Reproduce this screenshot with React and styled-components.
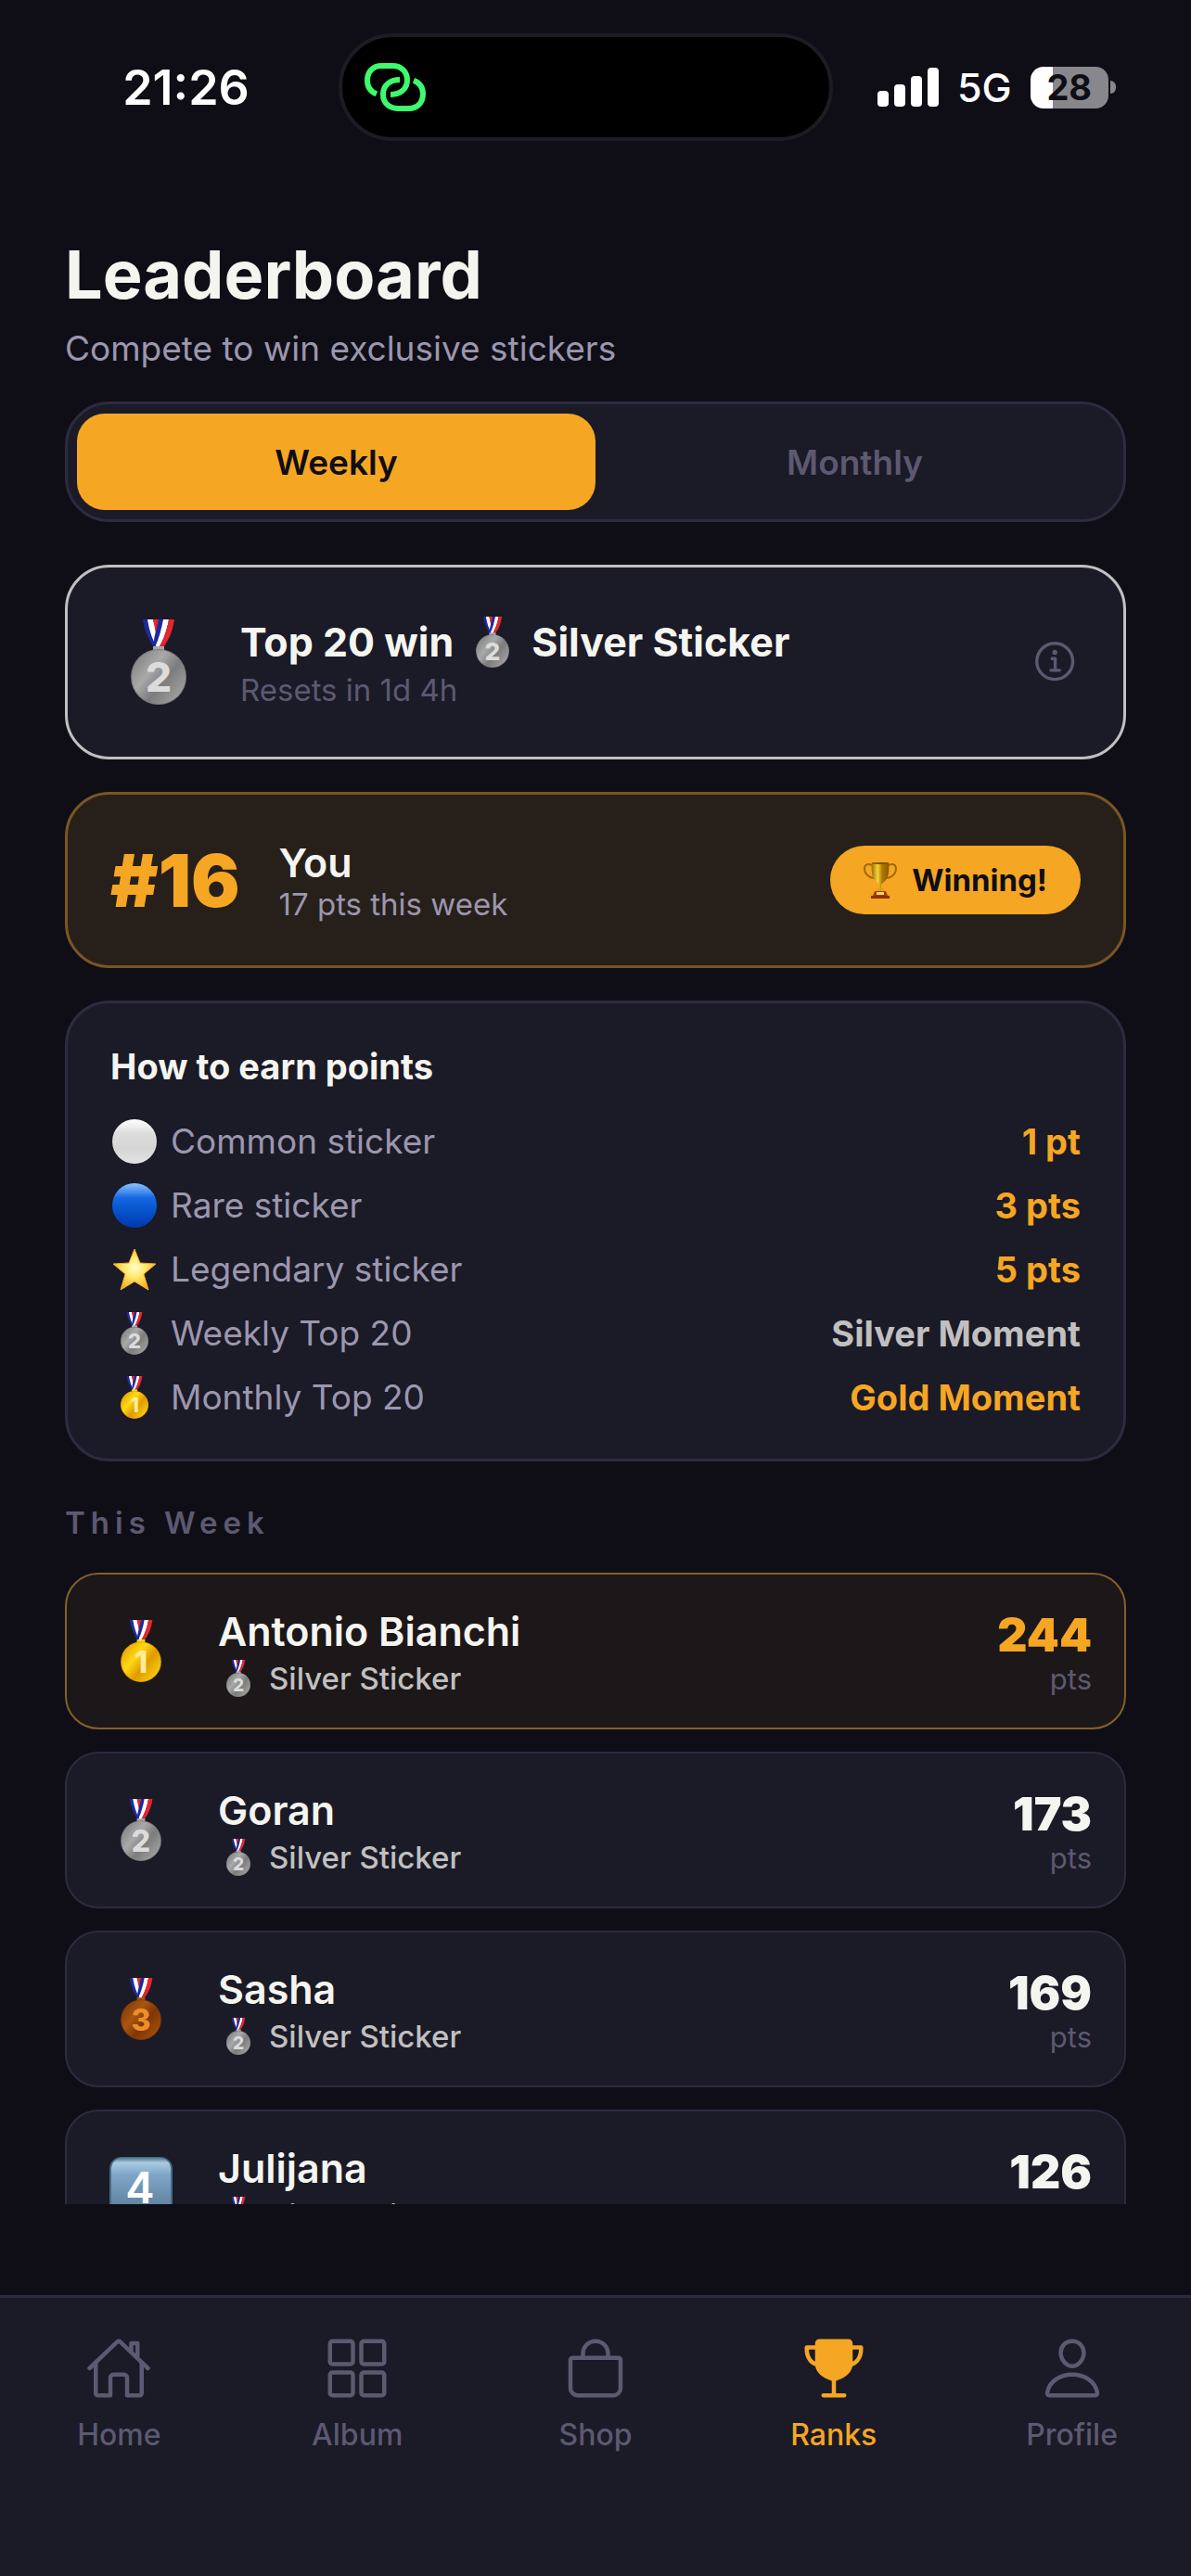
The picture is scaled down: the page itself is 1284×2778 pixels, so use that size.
import React, { useState } from "react";
import styled, { createGlobalStyle } from "styled-components";
import {
  IoHomeOutline,
  IoGridOutline,
  IoBagOutline,
  IoTrophy,
  IoPersonOutline,
  IoInformationCircleOutline,
} from "react-icons/io5";

const colors = {
  background: "#0f0e17",
  surface: "#1b1a27",
  border: "#2d2b40",
  gold: "#f5a623",
  silver: "#c0c0c0",
  text: "#f5f5f0",
  textSoft: "#9b97ae",
  textMuted: "#5c5970",
};

const GlobalStyle = createGlobalStyle`
  * {
    box-sizing: border-box;
  }
  body {
    margin: 0;
    background: ${colors.background};
    color: ${colors.text};
    font-family: Inter, "Liberation Sans", sans-serif;
  }
  h1, h2, h3, p, ul, ol, dl, dd, dt {
    margin: 0;
    padding: 0;
    list-style: none;
  }
  button {
    border: none;
    padding: 0;
    background: none;
    font-family: inherit;
    cursor: pointer;
  }
  svg {
    display: block;
    flex-shrink: 0;
  }
`;

const Screen = styled.div`
  height: 100vh;
  display: flex;
  flex-direction: column;
`;

/* status bar */

const StatusBar = styled.div`
  height: 188px;
  flex-shrink: 0;
  display: grid;
  grid-template-columns: 365fr 533fr 386fr;
  align-items: center;
`;

const Clock = styled.span`
  text-align: center;
  padding-left: 36px;
  color: #fff;
  font-size: 52px;
  font-weight: 600;
`;

const Island = styled.div`
  height: 116px;
  display: flex;
  align-items: center;
  padding-left: 24px;
  border: 4px solid #1d1c23;
  border-radius: 58px;
  background: #000;
`;

const StatusRight = styled.div`
  display: flex;
  align-items: center;
  gap: 20px;
  padding-left: 48px;
`;

const Network = styled.span`
  color: #fff;
  font-size: 43px;
  font-weight: 500;
`;

const BatteryWrap = styled.div`
  display: flex;
  align-items: center;
  gap: 2px;
`;

const BatteryBody = styled.div`
  width: 84px;
  height: 45px;
  display: flex;
  align-items: center;
  justify-content: center;
  border-radius: 14px;
  background: linear-gradient(to right, #fff 28%, #88878c 28%);
  color: ${colors.background};
  font-size: 38px;
  font-weight: 700;
`;

const BatteryTip = styled.div`
  width: 6px;
  height: 14px;
  border-radius: 0 6px 6px 0;
  background: #88878c;
`;

/* content */

const Scroll = styled.main`
  flex: 1;
  min-height: 0;
  overflow-y: auto;
  scrollbar-width: none;
  margin-bottom: 98px;
  padding: 63px 70px 0;
`;

const Header = styled.header`
  margin-bottom: 33px;
`;

const Title = styled.h1`
  font-size: 72px;
  line-height: 90px;
  font-weight: 700;
`;

const Subtitle = styled.p`
  margin-top: 11px;
  color: ${colors.textSoft};
  font-size: 37px;
  line-height: 48px;
`;

const Tabs = styled.div`
  display: flex;
  margin-bottom: 46px;
  padding: 10px;
  border: 3px solid ${colors.border};
  border-radius: 48px;
  background: ${colors.surface};
`;

const Tab = styled.button`
  flex: 1;
  height: 104px;
  border-radius: 30px;
  background: ${(props) => (props.$active ? colors.gold : "transparent")};
  color: ${(props) => (props.$active ? colors.background : colors.textMuted)};
  font-size: 37px;
  font-weight: 600;
`;

const Card = styled.section`
  margin-bottom: 35px;
  border: 3px solid ${colors.border};
  border-radius: 48px;
  background: ${colors.surface};
`;

const PrizeCard = styled(Card)`
  height: 210px;
  display: flex;
  align-items: center;
  gap: 36px;
  padding: 0 46px;
  border-color: ${colors.silver};
`;

const PrizeMedal = styled.div`
  width: 104px;
  display: flex;
  justify-content: center;
`;

const PrizeInfo = styled.div`
  flex: 1;
`;

const PrizeTitle = styled.h2`
  display: flex;
  align-items: center;
  gap: 24px;
  font-size: 43px;
  line-height: 60px;
  font-weight: 700;
`;

const PrizeReset = styled.p`
  color: ${colors.textMuted};
  font-size: 33px;
  line-height: 44px;
`;

const InfoButton = styled.button`
  color: ${colors.textMuted};
  font-size: 54px;
`;

const YouCard = styled(Card)`
  height: 190px;
  display: flex;
  align-items: center;
  gap: 42px;
  padding: 0 46px;
  border-color: #7a5522;
  background: #271f1a;
`;

const YouRank = styled.span`
  color: ${colors.gold};
  font-size: 78px;
  font-weight: 900;
`;

const YouInfo = styled.div`
  flex: 1;
`;

const YouName = styled.h2`
  font-size: 43px;
  line-height: 52px;
  font-weight: 600;
`;

const YouPoints = styled.p`
  color: ${colors.textSoft};
  font-size: 33px;
  line-height: 38px;
`;

const WinBadge = styled.span`
  height: 74px;
  display: flex;
  align-items: center;
  gap: 16px;
  padding: 0 36px;
  border-radius: 37px;
  background: ${colors.gold};
  color: ${colors.background};
  font-size: 33px;
  font-weight: 700;
`;

const EarnCard = styled(Card)`
  margin-bottom: 46px;
  padding: 43px 46px 32px;
`;

const EarnTitle = styled.h2`
  margin-bottom: 21px;
  font-size: 38px;
  line-height: 50px;
  font-weight: 700;
`;

const EarnRow = styled.div`
  height: 69px;
  display: flex;
  align-items: center;
  justify-content: space-between;
  font-size: 37px;
`;

const EarnLabel = styled.dt`
  display: flex;
  align-items: center;
  gap: 13px;
  color: ${colors.textSoft};
`;

const EarnIcon = styled.span`
  width: 52px;
  display: flex;
  justify-content: center;
`;

const EarnValue = styled.dd`
  color: ${(props) => props.$color || colors.gold};
  font-size: 38px;
  font-weight: 700;
`;

const SectionLabel = styled.h3`
  margin-bottom: 34px;
  color: ${colors.textMuted};
  font-size: 33px;
  line-height: 40px;
  font-weight: 600;
  letter-spacing: 6px;
`;

const PlayerRow = styled.li`
  height: 169px;
  display: flex;
  align-items: center;
  gap: 38px;
  margin-bottom: 24px;
  padding: 0 35px;
  border: 2px solid ${(props) => (props.$first ? "#85602a" : colors.border)};
  border-radius: 36px;
  background: ${(props) => (props.$first ? "#1c1718" : colors.surface)};
`;

const PlayerRank = styled.div`
  width: 90px;
  display: flex;
  justify-content: center;
`;

const PlayerInfo = styled.div`
  flex: 1;
`;

const PlayerName = styled.h4`
  margin: 0;
  font-size: 43px;
  line-height: 58px;
  font-weight: 600;
`;

const PlayerPrize = styled.p`
  display: flex;
  align-items: center;
  gap: 20px;
  padding-left: 9px;
  color: ${colors.silver};
  font-size: 33px;
  line-height: 44px;
  font-weight: 500;
`;

const PlayerScore = styled.div`
  text-align: right;
`;

const ScoreValue = styled.div`
  color: ${(props) => (props.$first ? colors.gold : colors.text)};
  font-size: 50px;
  line-height: 59px;
  font-weight: 900;
`;

const ScoreUnit = styled.div`
  color: ${colors.textMuted};
  font-size: 31px;
  line-height: 35px;
`;

/* bottom navigation */

const BottomNav = styled.nav`
  height: 303px;
  flex-shrink: 0;
  display: grid;
  grid-template-columns: repeat(5, 1fr);
  align-items: start;
  padding-top: 40px;
  border-top: 3px solid ${colors.border};
  background: ${colors.surface};
`;

const NavItem = styled.a`
  display: flex;
  flex-direction: column;
  align-items: center;
  gap: 14px;
  color: ${(props) => (props.$active ? colors.gold : colors.textMuted)};
  font-size: 32px;
  line-height: 44px;
  font-weight: 500;
  text-decoration: none;

  svg {
    width: 72px;
    height: 72px;
  }
`;

const medalColors = {
  1: { light: "#ffd914", dark: "#e09a00", number: "#ffec9a" },
  2: { light: "#a9a9a9", dark: "#7c7c7c", number: "#dcdcdc" },
  3: { light: "#a9560f", dark: "#7d3606", number: "#ee8d2c" },
};

const Medal = ({ place, size }) => {
  const { light, dark, number } = medalColors[place];
  return (
    <svg width={size} height={Math.round((size * 92) / 60)} viewBox="0 0 60 92">
      <defs>
        <linearGradient id={`disc${place}`} x1="0" y1="0.1" x2="1" y2="0.9">
          <stop offset="0" stopColor={dark} />
          <stop offset="0.35" stopColor={light} />
          <stop offset="0.6" stopColor={dark} />
          <stop offset="1" stopColor={light} />
        </linearGradient>
      </defs>
      <path d="M13 0h5l10 30h-3C19 22 15 12 13 0z" fill="#1d2a9c" />
      <path d="M18 0h6l6 22-2 8C23 21 20 12 18 0z" fill="#fff" />
      <path d="M24 0h6l1 20-2 5z" fill="#e5262c" />
      <path d="M30 0h5c-2 12-5 22-9 30h-2c1-12 4-20 6-30z" fill="#1d2a9c" />
      <path d="M35 0h6c-2 12-6 23-11 31h-4c4-10 7-20 9-31z" fill="#fff" />
      <path d="M41 0h6c-2 13-6 23-13 31h-4c5-9 9-19 11-31z" fill="#e5262c" />
      <path d="M24 29h12v5H24z" fill={light} />
      <circle cx="30" cy="62" r="30" fill={dark} />
      <circle cx="30" cy="62" r="29" fill={`url(#disc${place})`} />
      <text
        x="30"
        y="78"
        textAnchor="middle"
        fontFamily="Inter, sans-serif"
        fontSize="44"
        fontWeight="800"
        fill={number}
      >
        {place}
      </text>
    </svg>
  );
};

const Ball = ({ id, stops }) => (
  <svg width="48" height="48" viewBox="0 0 48 48">
    <defs>
      <linearGradient id={id} x1="0" y1="0" x2="0" y2="1">
        {stops.map((color, i) => (
          <stop key={color} offset={i / (stops.length - 1)} stopColor={color} />
        ))}
      </linearGradient>
    </defs>
    <circle cx="24" cy="24" r="24" fill={`url(#${id})`} />
  </svg>
);

const Star = () => (
  <svg width="48" height="46" viewBox="0 0 48 46">
    <defs>
      <radialGradient id="star" cx="0.5" cy="0.45" r="0.6">
        <stop offset="0" stopColor="#fffbd0" />
        <stop offset="0.4" stopColor="#ffe96e" />
        <stop offset="1" stopColor="#f3a712" />
      </radialGradient>
    </defs>
    <path
      d="M24 1l6 15 17 1-13 11 5 17-15-9-15 9 5-17L1 17l17-1z"
      fill="url(#star)"
      stroke="#f2ad2c"
      strokeWidth="1"
      strokeLinejoin="round"
    />
  </svg>
);

const GoldCup = () => (
  <svg width="36" height="40" viewBox="0 0 36 40">
    <defs>
      <linearGradient id="cup" x1="0" y1="0" x2="1" y2="0">
        <stop offset="0" stopColor="#a06a00" />
        <stop offset="0.35" stopColor="#f5d53a" />
        <stop offset="0.6" stopColor="#b27a00" />
        <stop offset="1" stopColor="#8a5600" />
      </linearGradient>
    </defs>
    <path
      d="M9 4C5 2 1 3 1 8c0 5 4 9 10 10M27 4c4-2 8-1 8 4 0 5-4 9-10 10"
      fill="none"
      stroke="#9c6a0a"
      strokeWidth="2"
    />
    <path d="M9 1h18c1 10 0 18-6 22l-2 2v5h-2v-5l-2-2C9 19 8 11 9 1z" fill="url(#cup)" />
    <ellipse cx="18" cy="2" rx="9" ry="1" fill="#7d5200" />
    <path d="M15 29h6l3 4H12z" fill="#d9a516" />
    <path d="M12 32h12l2 5H10z" fill="#a33d12" />
    <path d="M8 37h20v3H8z" fill="#8c2f0c" />
    <path d="M14 33h8v3h-8z" fill="#f2d36b" />
  </svg>
);

const KeycapFour = () => (
  <svg width="68" height="68" viewBox="0 0 68 68">
    <defs>
      <linearGradient id="keycap" x1="0" y1="0" x2="0" y2="1">
        <stop offset="0" stopColor="#4f7690" />
        <stop offset="0.08" stopColor="#a9cbe0" />
        <stop offset="0.28" stopColor="#7ea6c8" />
        <stop offset="1" stopColor="#56748f" />
      </linearGradient>
    </defs>
    <rect width="68" height="68" rx="13" fill="#486a82" />
    <rect x="2" y="1" width="64" height="66" rx="12" fill="url(#keycap)" />
    <text
      x="33"
      y="50"
      textAnchor="middle"
      fontFamily="Inter, sans-serif"
      fontSize="47"
      fontWeight="600"
      fill="#fff"
    >
      4
    </text>
  </svg>
);

const HotspotIcon = () => (
  <svg width="66" height="52" viewBox="99 84 198 156" fill="none" stroke="#3dfb6c" strokeWidth="18">
    <path d="M138 184C118 176 108 160 108 140C108 112 126 93 154 93H190C218 93 237 112 237 139C237 168 215 186 183 186" />
    <path
      transform="rotate(180 198 162)"
      d="M138 184C118 176 108 160 108 140C108 112 126 93 154 93H190C218 93 237 112 237 139C237 168 215 186 183 186"
    />
  </svg>
);

const SignalBars = () => (
  <svg width="66" height="42" viewBox="0 0 66 42" fill="#fff">
    <rect x="0" y="25" width="12" height="17" rx="4" />
    <rect x="18" y="18" width="12" height="24" rx="4" />
    <rect x="36" y="9" width="12" height="33" rx="4" />
    <rect x="54" y="0" width="12" height="42" rx="4" />
  </svg>
);

const earnRows = [
  {
    label: "Common sticker",
    value: "1 pt",
    icon: <Ball id="white" stops={["#ffffff", "#dcdcdc", "#d6d6d6", "#e2e2e2"]} />,
  },
  {
    label: "Rare sticker",
    value: "3 pts",
    icon: <Ball id="blue" stops={["#8cc4ff", "#1467e0", "#0550c8", "#0437ad"]} />,
  },
  { label: "Legendary sticker", value: "5 pts", icon: <Star /> },
  {
    label: "Weekly Top 20",
    value: "Silver Moment",
    color: colors.silver,
    icon: <Medal place={2} size={30} />,
  },
  { label: "Monthly Top 20", value: "Gold Moment", icon: <Medal place={1} size={30} /> },
];

const players = [
  { name: "Antonio Bianchi", points: 244 },
  { name: "Goran", points: 173 },
  { name: "Sasha", points: 169 },
  { name: "Julijana", points: 126 },
];

const navItems = [
  { label: "Home", Icon: IoHomeOutline },
  { label: "Album", Icon: IoGridOutline },
  { label: "Shop", Icon: IoBagOutline },
  { label: "Ranks", Icon: IoTrophy },
  { label: "Profile", Icon: IoPersonOutline },
];

const App = () => {
  const [period, setPeriod] = useState("Weekly");

  return (
    <Screen>
      <GlobalStyle />
      <StatusBar>
        <Clock>21:26</Clock>
        <Island>
          <HotspotIcon />
        </Island>
        <StatusRight>
          <SignalBars />
          <Network>5G</Network>
          <BatteryWrap>
            <BatteryBody>28</BatteryBody>
            <BatteryTip />
          </BatteryWrap>
        </StatusRight>
      </StatusBar>

      <Scroll>
        <Header>
          <Title>Leaderboard</Title>
          <Subtitle>Compete to win exclusive stickers</Subtitle>
        </Header>

        <Tabs>
          {["Weekly", "Monthly"].map((item) => (
            <Tab key={item} $active={item === period} onClick={() => setPeriod(item)}>
              {item}
            </Tab>
          ))}
        </Tabs>

        <PrizeCard>
          <PrizeMedal>
            <Medal place={2} size={60} />
          </PrizeMedal>
          <PrizeInfo>
            <PrizeTitle>
              <span>Top 20 win</span>
              <Medal place={2} size={36} />
              <span>Silver Sticker</span>
            </PrizeTitle>
            <PrizeReset>Resets in 1d 4h</PrizeReset>
          </PrizeInfo>
          <InfoButton aria-label="Prize info">
            <IoInformationCircleOutline />
          </InfoButton>
        </PrizeCard>

        <YouCard>
          <YouRank>#16</YouRank>
          <YouInfo>
            <YouName>You</YouName>
            <YouPoints>17 pts this week</YouPoints>
          </YouInfo>
          <WinBadge>
            <GoldCup />
            Winning!
          </WinBadge>
        </YouCard>

        <EarnCard>
          <EarnTitle>How to earn points</EarnTitle>
          <dl>
            {earnRows.map((row) => (
              <EarnRow key={row.label}>
                <EarnLabel>
                  <EarnIcon>{row.icon}</EarnIcon>
                  {row.label}
                </EarnLabel>
                <EarnValue $color={row.color}>{row.value}</EarnValue>
              </EarnRow>
            ))}
          </dl>
        </EarnCard>

        <SectionLabel>This Week</SectionLabel>
        <ol>
          {players.map((player, index) => (
            <PlayerRow key={player.name} $first={index === 0}>
              <PlayerRank>
                {index < 3 ? <Medal place={index + 1} size={44} /> : <KeycapFour />}
              </PlayerRank>
              <PlayerInfo>
                <PlayerName>{player.name}</PlayerName>
                <PlayerPrize>
                  <Medal place={2} size={26} />
                  Silver Sticker
                </PlayerPrize>
              </PlayerInfo>
              <PlayerScore>
                <ScoreValue $first={index === 0}>{player.points}</ScoreValue>
                <ScoreUnit>pts</ScoreUnit>
              </PlayerScore>
            </PlayerRow>
          ))}
        </ol>
      </Scroll>

      <BottomNav>
        {navItems.map(({ label, Icon }) => (
          <NavItem key={label} href="#" $active={label === "Ranks"}>
            <Icon />
            {label}
          </NavItem>
        ))}
      </BottomNav>
    </Screen>
  );
};

export default App;
